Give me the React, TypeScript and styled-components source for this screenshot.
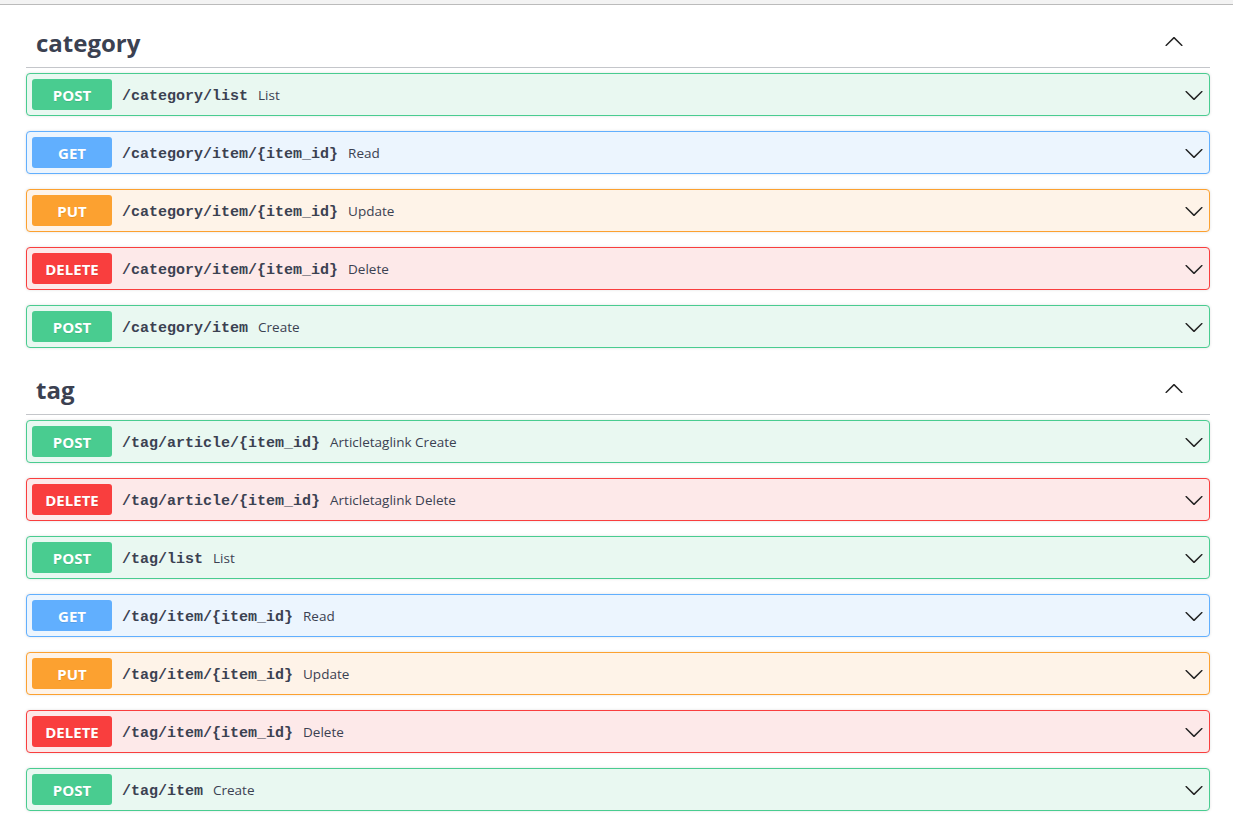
import styled, { createGlobalStyle } from "styled-components";

type Method = "GET" | "POST" | "PUT" | "DELETE";

const methodColors: Record<Method, string> = {
  GET: "#61affe",
  POST: "#49cc90",
  PUT: "#fca130",
  DELETE: "#f93e3e",
};

const methodBg: Record<Method, string> = {
  GET: "#ecf5fe",
  POST: "#e9f8f1",
  PUT: "#fef3e8",
  DELETE: "#fde9e9",
};

const GlobalStyle = createGlobalStyle`
  body {
    margin: 0;
    background: #fff;
    font-family: "Open Sans", "Noto Sans", sans-serif;
    color: #3b4151;
  }
`;

const TopStrip = styled.div`
  height: 4px;
  background: #f3f3f3;
  border-bottom: 1px solid #bbb;
`;

const Wrapper = styled.div`
  padding: 0 23px 0 26px;
`;

const Section = styled.section`
  &:first-child {
    padding-top: 11px;
  }
`;

const TagHeader = styled.div`
  display: flex;
  align-items: center;
  padding: 11px 26px 8px 10px;
  margin-bottom: 5px;
  border-bottom: 1px solid rgba(59, 65, 81, 0.3);
`;

const TagTitle = styled.h3`
  flex: 1;
  margin: 0;
  font-size: 24px;
  line-height: 32px;
  font-weight: 700;
  color: #3b4151;
`;

const Arrow = styled.svg<{ $up?: boolean }>`
  width: 20px;
  height: 20px;
  flex: none;
  fill: #222;
  transform: ${(p) => (p.$up ? "rotate(180deg)" : "none")};
  margin-top: ${(p) => (p.$up ? "-3px" : "0")};
`;

const OpBlock = styled.div<{ $method: Method }>`
  display: flex;
  align-items: center;
  padding: 5px;
  margin-bottom: 15px;
  border: 1px solid ${(p) => methodColors[p.$method]};
  border-radius: 4px;
  background: ${(p) => methodBg[p.$method]};
  box-shadow: 0 0 3px rgba(0, 0, 0, 0.12);
`;

const MethodBadge = styled.span<{ $method: Method }>`
  width: 80px;
  height: 31px;
  flex: none;
  display: flex;
  align-items: center;
  justify-content: center;
  border-radius: 3px;
  background: ${(p) => methodColors[p.$method]};
  color: #fff;
  font-size: 15px;
  font-weight: 700;
  text-shadow: 0 1px 0 rgba(0, 0, 0, 0.1);
`;

const Path = styled.span`
  padding: 4px 10px 0;
  font-family: "Liberation Mono", "DejaVu Sans Mono", monospace;
  font-size: 15px;
  font-weight: 700;
  color: #3b4151;
`;

const Summary = styled.span`
  flex: 1;
  font-size: 13.5px;
  color: #3b4151;
`;

const ChevronPath = () => (
  <path d="M17.418 6.109c.272-.268.709-.268.979 0s.271.701 0 .969l-7.908 7.83c-.27.268-.707.268-.979 0l-7.908-7.830c-.27-.268-.27-.701 0-.969.271-.268.709-.268.979 0L10 13.25l7.418-7.141z" />
);

type Op = { method: Method; path: string; summary: string };

const sections: { name: string; ops: Op[] }[] = [
  {
    name: "category",
    ops: [
      { method: "POST", path: "/category/list", summary: "List" },
      { method: "GET", path: "/category/item/{item_id}", summary: "Read" },
      { method: "PUT", path: "/category/item/{item_id}", summary: "Update" },
      { method: "DELETE", path: "/category/item/{item_id}", summary: "Delete" },
      { method: "POST", path: "/category/item", summary: "Create" },
    ],
  },
  {
    name: "tag",
    ops: [
      { method: "POST", path: "/tag/article/{item_id}", summary: "Articletaglink Create" },
      { method: "DELETE", path: "/tag/article/{item_id}", summary: "Articletaglink Delete" },
      { method: "POST", path: "/tag/list", summary: "List" },
      { method: "GET", path: "/tag/item/{item_id}", summary: "Read" },
      { method: "PUT", path: "/tag/item/{item_id}", summary: "Update" },
      { method: "DELETE", path: "/tag/item/{item_id}", summary: "Delete" },
      { method: "POST", path: "/tag/item", summary: "Create" },
    ],
  },
];

const App: React.FC = () => {
  return (
    <>
      <GlobalStyle />
      <TopStrip />
      <Wrapper>
        {sections.map((section) => (
          <Section key={section.name}>
            <TagHeader>
              <TagTitle>{section.name}</TagTitle>
              <Arrow $up viewBox="0 0 20 20">
                <ChevronPath />
              </Arrow>
            </TagHeader>
            {section.ops.map((op, i) => (
              <OpBlock key={i} $method={op.method}>
                <MethodBadge $method={op.method}>{op.method}</MethodBadge>
                <Path>{op.path}</Path>
                <Summary>{op.summary}</Summary>
                <Arrow viewBox="0 0 20 20">
                  <ChevronPath />
                </Arrow>
              </OpBlock>
            ))}
          </Section>
        ))}
      </Wrapper>
    </>
  );
};

export default App;
